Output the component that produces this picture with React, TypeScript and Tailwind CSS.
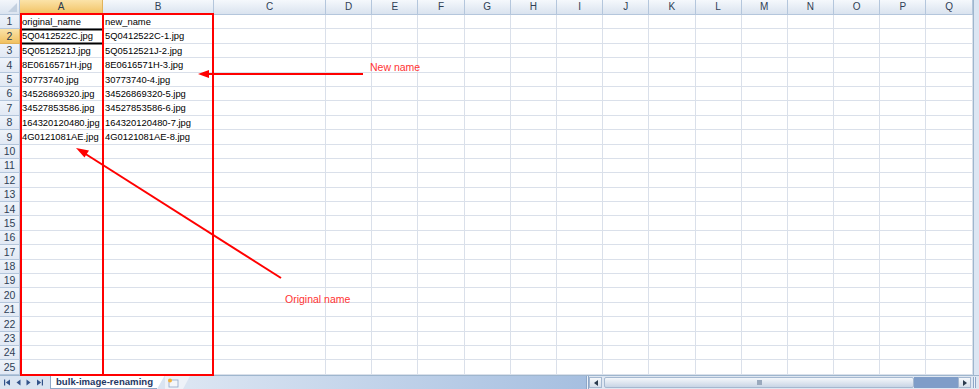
import React from "react";

const colA = ["original_name","5Q0412522C.jpg","5Q0512521J.jpg","8E0616571H.jpg","30773740.jpg","34526869320.jpg","34527853586.jpg","164320120480.jpg","4G0121081AE.jpg"];
const colB = ["new_name","5Q0412522C-1.jpg","5Q0512521J-2.jpg","8E0616571H-3.jpg","30773740-4.jpg","34526869320-5.jpg","34527853586-6.jpg","164320120480-7.jpg","4G0121081AE-8.jpg"];
const letters = ["A","B","C","D","E","F","G","H","I","J","K","L","M","N","O","P","Q"];

export default function App() {
  const rows = Array.from({ length: 25 }, (_, i) => i + 1);
  return (
    <div className="relative w-[979px] h-[389px] overflow-hidden bg-white" style={{ fontFamily: '"Liberation Sans", Arial, sans-serif' }}>
      <div className="flex h-[375px]">
        <div className="grid grid-cols-[20px_83px_111px_112px_repeat(14,46.2px)] grid-rows-[15px_repeat(25,14.4px)] w-[973px]">
          {/* corner */}
          <div className="relative border-r border-b border-[#b4c6dc] bg-gradient-to-b from-[#f3f6fb] to-[#dbe4f0]">
            <div className="absolute right-[2px] bottom-[2px] w-0 h-0 border-l-[9px] border-l-transparent border-b-[9px] border-b-[#c3d0e0]" />
          </div>
          {letters.map((l) => (
            <div
              key={l}
              className={
                "flex items-center justify-center border-r border-b text-[10px] leading-none " +
                (l === "A"
                  ? "border-[#e2b35a] bg-gradient-to-b from-[#fbe3a8] to-[#f1c15f] text-[#2b3a4d]"
                  : "border-[#b4c6dc] bg-gradient-to-b from-[#f5f8fc] to-[#dae3ef] text-[#2f3f55]")
              }
            >
              {l}
            </div>
          ))}
          {rows.map((r) => (
            <React.Fragment key={r}>
              <div
                className={
                  "flex items-center justify-center border-r border-b text-[10.5px] leading-none " +
                  (r === 2
                    ? "border-[#e2b35a] bg-gradient-to-b from-[#fbe3a8] to-[#f1c15f] text-[#2b3a4d]"
                    : "border-[#b4c6dc] bg-gradient-to-b from-[#eef3fa] to-[#e2e9f4] text-[#2f3f55]")
                }
              >
                {r}
              </div>
              {letters.map((l, ci) => (
                <div key={l} className="flex items-center border-r border-b border-[#dae0ea] pl-[2px] text-[9.4px] leading-none text-black whitespace-nowrap overflow-visible">
                  {ci === 0 && r <= 9 ? colA[r - 1] : ci === 1 && r <= 9 ? colB[r - 1] : ""}
                </div>
              ))}
            </React.Fragment>
          ))}
        </div>
        {/* vertical scrollbar edge */}
        <div className="w-[6px] h-full bg-[#dce6f3] border-l border-[#9eb6ce]" />
      </div>

      {/* bottom tab bar */}
      <div className="flex h-[14px] bg-[#dae4f1] border-t border-[#9eb6ce] items-stretch">
        <div className="flex items-center gap-[5px] pl-[4px] w-[50px]">
          <svg width="7" height="7" viewBox="0 0 7 7"><rect x="0" y="0.5" width="1.2" height="6" fill="#33538a"/><polygon points="6,0.5 6,6.5 1.8,3.5" fill="#33538a"/></svg>
          <svg width="5" height="7" viewBox="0 0 5 7"><polygon points="4.5,0.5 4.5,6.5 0.5,3.5" fill="#33538a"/></svg>
          <svg width="5" height="7" viewBox="0 0 5 7"><polygon points="0.5,0.5 0.5,6.5 4.5,3.5" fill="#33538a"/></svg>
          <svg width="7" height="7" viewBox="0 0 7 7"><polygon points="1,0.5 1,6.5 5.2,3.5" fill="#33538a"/><rect x="5.8" y="0.5" width="1.2" height="6" fill="#33538a"/></svg>
        </div>
        <div className="relative flex items-center pl-[5px] w-[107px] bg-white border-l border-b border-[#8ea7c8] -mt-px text-[9.6px] font-bold text-[#1f3864] leading-none whitespace-nowrap">
          bulk-image-renaming
        </div>
        <div className="w-0 h-0 -mt-px border-t-[14px] border-t-white border-r-[8px] border-r-transparent" />
        <div className="flex items-center pl-[1px] w-[18px] bg-[#eef2f8]">
          <svg width="14" height="10" viewBox="0 0 14 10">
            <rect x="3" y="2" width="9" height="7" fill="#f4f6fa" stroke="#8ea7c8" strokeWidth="0.8"/>
            <circle cx="4" cy="2.5" r="2" fill="#f2b33d"/>
          </svg>
        </div>
        <div className="w-0 h-0 border-t-[13px] border-t-[#eef2f8] border-r-[7px] border-r-transparent" />
        <div className="w-[396px] bg-gradient-to-r from-[#dbe5f2] to-[#a6bfe0]" />
        {/* splitter */}
        <div className="w-[3px] bg-[#eef3f9] border-x border-[#8ea7c8]" />
        {/* horizontal scrollbar */}
        <div className="flex flex-1 items-stretch bg-[#dfe7f2] py-[1px]">
          <div className="flex items-center justify-center w-[13px] bg-gradient-to-b from-[#f6f8fb] to-[#d5deea] border border-[#a5b8d0]">
            <svg width="4" height="6" viewBox="0 0 4 6"><polygon points="4,0 4,6 0,3" fill="#2b3a4d"/></svg>
          </div>
          <div className="flex items-center justify-center w-[310px] ml-[2px] bg-gradient-to-b from-[#f4f7fb] to-[#c9d5e5] border border-[#a5b8d0] rounded-[2px]">
            <div className="w-[5px] h-[5px] bg-[#9aa9bd]" />
          </div>
          <div className="flex-1 bg-[#7f9dc8]" />
          <div className="flex items-center justify-center w-[13px] bg-gradient-to-b from-[#f6f8fb] to-[#d5deea] border border-[#a5b8d0]">
            <svg width="4" height="6" viewBox="0 0 4 6"><polygon points="0,0 0,6 4,3" fill="#2b3a4d"/></svg>
          </div>
          <div className="w-[3px] ml-[2px] mr-[3px] bg-[#eef3f9] border-x border-[#8ea7c8]" />
        </div>
      </div>

      {/* annotations overlay */}
      <svg className="absolute left-0 top-0 pointer-events-none" width="979" height="389" viewBox="0 0 979 389">
        {/* active cell border */}
        <line x1="20" y1="29.5" x2="103" y2="29.5" stroke="#000" strokeWidth="2" />
        <line x1="20" y1="43.5" x2="103" y2="43.5" stroke="#000" strokeWidth="2" />
        {/* red rectangles */}
        <rect x="21" y="14" width="82" height="361" fill="none" stroke="#ff0000" strokeWidth="2" />
        <rect x="103" y="14" width="110" height="361" fill="none" stroke="#ff0000" strokeWidth="2" />
        {/* new name arrow */}
        <line x1="363" y1="74" x2="206" y2="74" stroke="#ff0000" strokeWidth="2" />
        <polygon points="198,74 209,70 209,78" fill="#ff0000" />
        {/* original name arrow */}
        <line x1="281" y1="278" x2="84" y2="153" stroke="#ff0000" strokeWidth="2" />
        <polygon points="76,148 89,150.5 84.5,157.5" fill="#ff0000" />
      </svg>
      <div className="absolute left-[370px] top-[62px] text-[10.5px] leading-none text-[#ff3333] whitespace-nowrap">New name</div>
      <div className="absolute left-[285px] top-[294px] text-[10.5px] leading-none text-[#ff3333] whitespace-nowrap">Original name</div>
    </div>
  );
}
